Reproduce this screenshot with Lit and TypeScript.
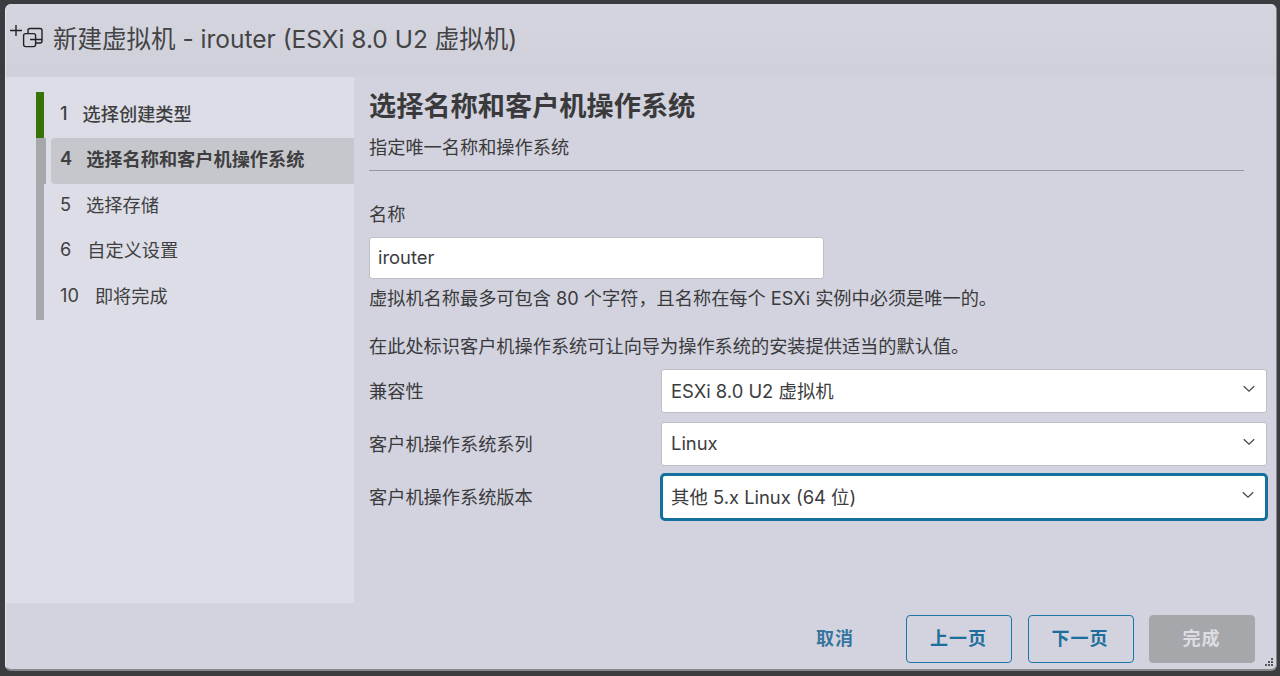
import { LitElement, html, css } from "lit";
import { customElement } from "lit/decorators.js";

const chevron = html`<svg class="chev" width="12" height="8" viewBox="0 0 12 8"><path d="M0.8 1.2 L6 6.2 L11.2 1.2" fill="none" stroke="#444" stroke-width="1.2"/></svg>`;

@customElement("app-root")
export class AppRoot extends LitElement {
  static styles = css`
    :host { display: block; width: 1280px; height: 676px; background: #3b3c40; overflow: hidden;
      font-family: Inter, "Noto Sans CJK SC", sans-serif; color: #3a3a3c; }
    * { box-sizing: border-box; }
    .page { padding: 4px 3px 5px 5px; height: 676px; }
    .dialog { position: relative; height: 667px; background: #d2d3de; border-radius: 6px; display: flex; flex-direction: column;
      overflow: hidden; border-bottom: 2px solid #87878c; border-right: 1px solid #87878c; border-left: 1px solid #e4e5ec; }
    .head { height: 73px; display: flex; align-items: center; padding: 0 0 7px 4px; flex: none; background: linear-gradient(#d4d5df, #cfd0da); }
    .head svg { align-self: flex-start; margin: 20px 10px 0 0; flex: none; }
    .title { font-size: 24.5px; color: #444446; }
    .body { flex: 1; display: flex; min-height: 0; }
    .side { width: 348px; flex: none; background: #dcdde6; padding: 15px 0 0 30px; }
    .steps { width: 318px; display: flex; flex-direction: column; }
    .step { height: 45.5px; display: flex; align-items: center; font-size: 18.2px; border-left: 8px solid #a7a8ac; padding: 0 0 5px 16px; color: #3f3f41; }
    .step .n { flex: none; }
    .step.first { border-left-color: #367309; font-weight: 500; height: 46px; }
    .step.active { border-left-width: 10px; padding: 0; font-weight: 600; }
    .fill { flex: 1; height: 100%; margin-left: 5px; padding: 0 0 5px 9px; background: #c6c7cd; border-radius: 4px 0 0 4px; display: flex; align-items: center; }
    .main { flex: 1; padding: 12px 10px 0 15px; min-width: 0; }
    h2 { margin: 0; font-size: 27.2px; line-height: 36px; font-weight: 700; color: #3a3a3c; }
    .sub { font-size: 18.2px; line-height: 24px; margin: 10px 0 0 0; padding-bottom: 11px; border-bottom: 1px solid #96969c; width: 875px; }
    .lab { font-size: 18.2px; line-height: 24px; margin: 31px 0 0 0; }
    .input { width: 455px; height: 42px; margin-top: 11px; background: #fff; border: 1px solid #bfc0c5; border-radius: 3px;
      display: flex; align-items: center; padding: 0 8px 3px 8px; font-size: 18.4px; color: #3c3c3e; }
    .hint { font-size: 18.2px; line-height: 24px; margin: 7px 0 0 0; }
    .hint2 { font-size: 18.2px; line-height: 24px; margin: 24px 0 0 0; }
    .rows { display: grid; grid-template-columns: 292px 606px; row-gap: 9px; margin-top: 11px; align-items: center; }
    .rl { font-size: 18.2px; padding-bottom: 2px; }
    .sel { height: 44px; background: #fff; border: 1px solid #bfc0c5; border-radius: 3px; display: flex; align-items: center;
      justify-content: space-between; padding: 0 11px 2px 9px; font-size: 18.4px; color: #3c3c3e; }
    .sel.focus { border: 3px solid #14719f; height: 48px; width: 608px; margin: -2px 0 -2px -1px; border-radius: 5px; padding: 0 11px 2px 8px; }
    .chev { margin-bottom: 3px; }
    .foot { height: 66px; flex: none; display: flex; align-items: center; justify-content: flex-end; padding: 5px 21px 0 0; gap: 15.5px; }
    .btn { width: 106px; height: 48px; border: 1.5px solid #1a77a6; border-radius: 4px; display: flex; align-items: center; justify-content: center;
      color: #1d6e9c; font-weight: 600; font-size: 18px; letter-spacing: 1px; padding: 0 1px 3px 0; }
    .btn.flat { border-color: transparent; color: #36759e; width: 90px; margin-right: 10px; }
    .btn.off { background: #a6a7ab; border-color: #a6a7ab; color: #dcdde2; }
    .grip { position: absolute; right: 2px; bottom: 2px; }
  `;

  render() {
    return html`<div class="page"><div class="dialog">
      <div class="head">
        <svg width="33" height="26" viewBox="0 0 33 26" fill="none" stroke="#222" stroke-width="1.4">
          <path d="M0 6.5 H12 M6 1 V12"/>
          <rect x="13.6" y="9.6" width="12" height="13" rx="2"/>
          <path d="M18 9.6 V6.5 a2 2 0 0 1 2-2 H30 a2 2 0 0 1 2 2 V17 a2 2 0 0 1-2 2 H25.6"/>
          <path d="M20 15.5 H32"/>
        </svg>
        <span class="title">新建虚拟机 - irouter (ESXi 8.0 U2 虚拟机)</span>
      </div>
      <div class="body">
        <div class="side"><div class="steps">
          <div class="step first"><span class="n">1</span><span style="margin-left:15px">选择创建类型</span></div>
          <div class="step active"><div class="fill"><span class="n">4</span><span style="margin-left:14px">选择名称和客户机操作系统</span></div></div>
          <div class="step"><span class="n">5</span><span style="margin-left:15px">选择存储</span></div>
          <div class="step"><span class="n">6</span><span style="margin-left:16px">自定义设置</span></div>
          <div class="step"><span class="n">10</span><span style="margin-left:16px">即将完成</span></div>
        </div></div>
        <div class="main">
          <h2>选择名称和客户机操作系统</h2>
          <div class="sub">指定唯一名称和操作系统</div>
          <div class="lab">名称</div>
          <div class="input">irouter</div>
          <div class="hint">虚拟机名称最多可包含 80 个字符，且名称在每个 ESXi 实例中必须是唯一的。</div>
          <div class="hint2">在此处标识客户机操作系统可让向导为操作系统的安装提供适当的默认值。</div>
          <div class="rows">
            <div class="rl">兼容性</div><div class="sel"><span>ESXi 8.0 U2 虚拟机</span>${chevron}</div>
            <div class="rl">客户机操作系统系列</div><div class="sel"><span>Linux</span>${chevron}</div>
            <div class="rl">客户机操作系统版本</div><div class="sel focus"><span>其他 5.x Linux (64 位)</span>${chevron}</div>
          </div>
        </div>
      </div>
      <div class="foot">
        <div class="btn flat">取消</div>
        <div class="btn">上一页</div>
        <div class="btn">下一页</div>
        <div class="btn off">完成</div>
      </div>
      <svg class="grip" width="10" height="10" viewBox="0 0 10 10" fill="#55565a">
        <rect x="7" y="1" width="2" height="2"/><rect x="4" y="4" width="2" height="2"/><rect x="7" y="4" width="2" height="2"/>
        <rect x="1" y="7" width="2" height="2"/><rect x="4" y="7" width="2" height="2"/><rect x="7" y="7" width="2" height="2"/>
      </svg>
    </div></div>`;
  }
}
